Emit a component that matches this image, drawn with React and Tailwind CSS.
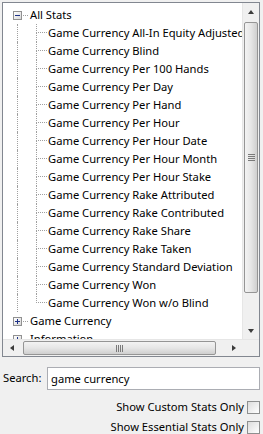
import React from "react";

const children = [
  "All-In Equity Adjusted",
  "Blind",
  "Per 100 Hands",
  "Per Day",
  "Per Hand",
  "Per Hour",
  "Per Hour Date",
  "Per Hour Month",
  "Per Hour Stake",
  "Rake Attributed",
  "Rake Contributed",
  "Rake Share",
  "Rake Taken",
  "Standard Deviation",
  "Won",
  "Won w/o Blind",
];

const font = { fontFamily: '"Noto Sans", "Liberation Sans", sans-serif' };

const Expander = ({ open }) => (
  <span className="relative flex h-[9px] w-[9px] shrink-0 items-center justify-center border border-[#919191] bg-gradient-to-br from-white to-[#d8d8d8]">
    <span className="absolute h-px w-[5px] bg-[#1e3287]" />
    {!open && <span className="absolute h-[5px] w-px bg-[#1e3287]" />}
  </span>
);

const TopRow = ({ label, open }) => (
  <div className="flex h-[18px] items-center pl-[10px]">
    <Expander open={open} />
    <span className="ml-px mr-[2px] w-[5px] border-t border-dotted border-[#a0a0a0]" />
    <span className="whitespace-nowrap">{label}</span>
  </div>
);

const ChildRow = ({ label, last }) => (
  <div className="flex h-[18px]">
    <span className="w-[14px] shrink-0" />
    <span className="w-[19px] shrink-0 border-l border-dotted border-[#a0a0a0]" />
    <span className="flex w-[11px] shrink-0 flex-col">
      <span className="h-[9px] border-b border-l border-dotted border-[#a0a0a0]" />
      {!last && <span className="flex-1 border-l border-dotted border-[#a0a0a0]" />}
    </span>
    <span className="ml-px flex items-center whitespace-nowrap">
      Game Currency {label}
    </span>
  </div>
);

const Checkbox = () => (
  <span className="h-[13px] w-[13px] shrink-0 border border-[#8e8f8f] bg-gradient-to-br from-[#dcdcdc] to-white" />
);

export default function App() {
  return (
    <div
      className="flex h-[434px] w-[263px] flex-col overflow-hidden bg-[#f0f0f0] pl-[2px] pt-[2px] text-[11.2px] text-black"
      style={font}
    >
      <div className="flex h-[355px] w-[258px] shrink-0 flex-col border border-[#828790] bg-white">
        <div className="flex min-h-0 flex-1">
          {/* tree */}
          <div className="min-w-0 flex-1 overflow-hidden pt-[3px]">
            <TopRow label="All Stats" open />
            {children.map((c, i) => (
              <ChildRow key={c} label={c} last={i === children.length - 1} />
            ))}
            <TopRow label="Game Currency" />
            <TopRow label="Information" />
          </div>
          {/* vertical scrollbar */}
          <div className="flex w-[17px] flex-col border-l border-[#e6e6e6] bg-[#f0f0f0]">
            <div className="flex h-[17px] items-center justify-center">
              <span className="h-0 w-0 border-x-[3.5px] border-b-[4px] border-x-transparent border-b-[#3c3c3c]" />
            </div>
            <div className="mx-[1px] mt-[2px] flex flex-1 flex-col pb-[29px]">
              <div className="flex flex-1 items-center justify-center rounded-[2px] border border-[#959595] bg-gradient-to-r from-[#f3f3f3] via-[#e6e6e6] to-[#cfcfcf]">
                <div className="flex flex-col gap-px">
                  <span className="h-px w-[7px] bg-[#7a7a7a]" />
                  <span className="h-px w-[7px] bg-[#7a7a7a]" />
                  <span className="h-px w-[7px] bg-[#7a7a7a]" />
                  <span className="h-px w-[7px] bg-[#7a7a7a]" />
                </div>
              </div>
            </div>
            <div className="flex h-[17px] items-center justify-center">
              <span className="h-0 w-0 border-x-[3.5px] border-t-[4px] border-x-transparent border-t-[#3c3c3c]" />
            </div>
          </div>
        </div>
        {/* horizontal scrollbar */}
        <div className="flex h-[17px] border-t border-[#e6e6e6] bg-[#f0f0f0]">
          <div className="flex w-[17px] items-center justify-center">
            <span className="h-0 w-0 border-y-[3.5px] border-r-[4px] border-y-transparent border-r-[#3c3c3c]" />
          </div>
          <div className="my-[1px] ml-[3px] mr-[9px] flex flex-1">
            <div className="flex flex-1 items-center justify-center rounded-[2px] border border-[#959595] bg-gradient-to-b from-[#f3f3f3] via-[#e6e6e6] to-[#cfcfcf]">
              <div className="flex gap-px">
                <span className="h-[7px] w-px bg-[#7a7a7a]" />
                <span className="h-[7px] w-px bg-[#7a7a7a]" />
                <span className="h-[7px] w-px bg-[#7a7a7a]" />
                <span className="h-[7px] w-px bg-[#7a7a7a]" />
              </div>
            </div>
          </div>
          <div className="flex w-[17px] items-center justify-center">
            <span className="h-0 w-0 border-y-[3.5px] border-l-[4px] border-y-transparent border-l-[#3c3c3c]" />
          </div>
          <div className="w-[17px] bg-[#f0f0f0]" />
        </div>
      </div>

      <div className="mt-[10px] flex shrink-0 items-center pl-px pr-[3px]">
        <span className="w-[44px]">Search:</span>
        <input
          className="h-[23px] min-w-0 flex-1 border border-[#abadb3] bg-white px-[3px] text-[11.2px] outline-none"
          style={font}
          defaultValue="game currency"
        />
      </div>
      <div className="mt-[10px] flex h-[15px] shrink-0 items-center justify-end gap-[3px] pr-[3px]">
        <span>Show Custom Stats Only</span>
        <Checkbox />
      </div>
      <div className="mt-[5px] flex h-[15px] shrink-0 items-center justify-end gap-[3px] pr-[3px]">
        <span>Show Essential Stats Only</span>
        <Checkbox />
      </div>
    </div>
  );
}
